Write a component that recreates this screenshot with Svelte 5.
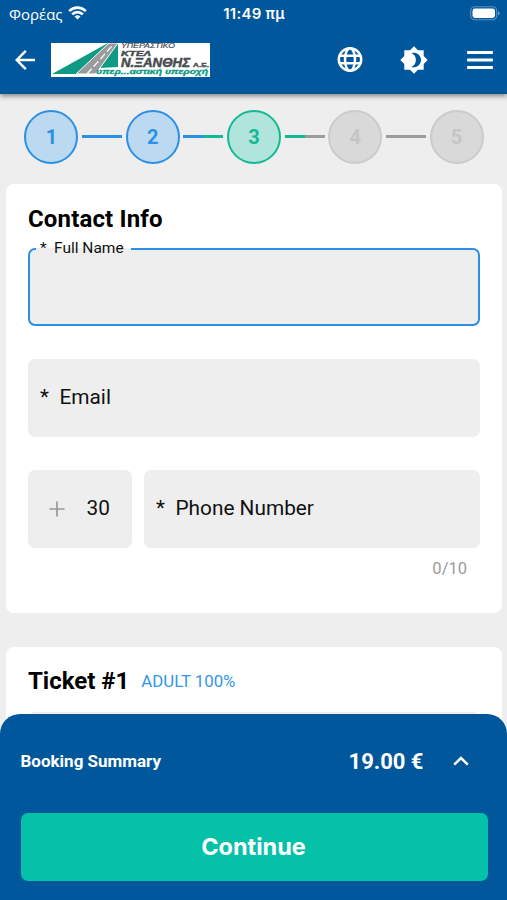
<script>
  const steps = [
    { n: 1, state: 'done', line: 'blue' },
    { n: 2, state: 'done', line: 'blue-green' },
    { n: 3, state: 'current', line: 'green-grey' },
    { n: 4, state: 'todo', line: 'grey' },
    { n: 5, state: 'todo', line: null }
  ];
</script>

<div class="screen">
  <header>
    <div class="status">
      <div class="carrier">
        <span>Φορέας</span>
        <svg width="19" height="14" viewBox="0 0 19 14" fill="none" stroke="#fff" stroke-width="2.7">
          <path d="M1.2 5.1a11.8 11.8 0 0 1 16.6 0" />
          <path d="M4.2 8.4a7.5 7.5 0 0 1 10.6 0" />
          <path d="M9.5 13.6L6.5 10.6a4.3 4.3 0 0 1 6 0Z" fill="#fff" stroke="none" />
        </svg>
      </div>
      <div class="time">11:49 πμ</div>
      <div class="battery">
        <svg width="30" height="15" viewBox="0 0 30 15">
          <rect x=".7" y=".7" width="26" height="13" rx="4" fill="none" stroke="#5b92c2" stroke-width="1.1" />
          <rect x="2.5" y="2.5" width="22.5" height="9.5" rx="2.4" fill="#fff" />
          <path d="M28 5v4.500q1.600-.8 1.600-2.250T28 5Z" fill="#6b9fca" />
        </svg>
      </div>
    </div>
    <nav>
      <svg class="back" width="22" height="22" viewBox="0 0 22 22" fill="none" stroke="#fff" stroke-width="2.4">
        <path d="M21 11H2.500M11.800 1.800L2.700 11l9.100 9.200" />
      </svg>
      <svg class="logo" width="159" height="34" viewBox="0 0 159 34">
        <rect width="159" height="34" fill="#fff" />
        <path d="M1 31L57 0H67V24L48 25L44 31Z" fill="#109a84" />
        <path d="M25 31L58 0H67L49 25L44 31Z" fill="#999b9c" stroke="#fff" stroke-width="1" />
        <path d="M36 31L61 3" stroke="#fff" stroke-width="1.300" stroke-dasharray="7 3" />
        <g font-family="Liberation Sans, Arial, sans-serif" font-weight="700" fill="#484b50" stroke="#484b50">
          <text x="70" y="5.300" font-size="7" font-weight="400" font-style="italic" stroke-width=".2" textLength="54" lengthAdjust="spacingAndGlyphs">ΥΠΕΡΑΣΤΙΚΟ</text>
          <text x="70" y="12.800" font-size="7" font-style="italic" stroke-width=".4" textLength="30" lengthAdjust="spacingAndGlyphs">ΚΤΕΛ</text>
          <text x="70" y="24" font-size="12.500" font-style="italic" stroke-width=".5" textLength="69" lengthAdjust="spacingAndGlyphs">Ν.ΞΑΝΘΗΣ</text>
          <text x="142" y="24" font-size="5.500" stroke-width=".3" textLength="16" lengthAdjust="spacingAndGlyphs">Α.Ε.</text>
          <text x="45" y="31" font-size="6.500" font-style="italic" fill="#109a84" stroke="#109a84" stroke-width=".3" textLength="112" lengthAdjust="spacingAndGlyphs">υπερ...αστική υπεροχή</text>
        </g>
      </svg>
      <div class="actions">
        <svg width="26" height="26" viewBox="0 0 26 26" fill="none" stroke="#fff" stroke-width="2.500">
          <circle cx="13" cy="12.500" r="11.200" />
          <ellipse cx="13" cy="12.500" rx="5" ry="11.200" />
          <path d="M2.800 8.800H23.200M2.800 16.200H23.200" />
        </svg>
        <svg width="28" height="28" viewBox="0 0 28 28">
          <path d="M14 .3L18 4.300H23.700V10L27.700 14L23.700 18V23.700H18L14 27.700L10 23.700H4.300V18L.3 14L4.300 10V4.300H10Z" fill="#fff" />
          <path d="M11.300 7.100A7.300 7.300 0 1 1 11.300 20.900A7.500 7.500 0 0 0 11.300 7.100Z" fill="#01579b" />
        </svg>
        <svg width="26" height="18" viewBox="0 0 26 18" fill="#fff">
          <rect width="26" height="3" rx=".8" />
          <rect y="7.500" width="26" height="3" rx=".8" />
          <rect y="15" width="26" height="3" rx=".8" />
        </svg>
      </div>
    </nav>
  </header>

  <div class="steps">
    {#each steps as s}
      <div class="step {s.state}">{s.n}</div>
      {#if s.line}<div class="line {s.line}"></div>{/if}
    {/each}
  </div>

  <section class="card contact">
    <h2>Contact Info</h2>
    <div class="field focused">
      <div class="float"><i>*</i><span>Full Name</span></div>
    </div>
    <div class="field"><i>*</i><span>Email</span></div>
    <div class="row">
      <div class="field code">
        <svg width="16" height="16" viewBox="0 0 16 16" stroke="#989898" stroke-width="1.700"><path d="M8 .5V15.500M.5 8H15.500" /></svg>
        <span>30</span>
      </div>
      <div class="field phone"><i>*</i><span>Phone Number</span></div>
    </div>
    <div class="counter">0/10</div>
  </section>

  <section class="card ticket">
    <div class="title"><h2>Ticket #1</h2><span>ADULT 100%</span></div>
    <div class="field"></div>
  </section>

  <footer>
    <div class="summary">
      <span class="label">Booking Summary</span>
      <span class="price">19.00 €</span>
      <svg width="16" height="10" viewBox="0 0 16 10" fill="none" stroke="#fff" stroke-width="2.500"><path d="M1.200 8.700L8 2L14.800 8.700" /></svg>
    </div>
    <button>Continue</button>
  </footer>
</div>

<style>
  :global(body) { margin: 0; }
  .screen, .screen * { box-sizing: border-box; }
  .screen {
    position: relative;
    width: 507px;
    height: 900px;
    overflow: hidden;
    background: #eee;
    color: #000;
    font-family: Roboto, "Noto Sans", sans-serif;
  }
  svg { display: block; flex: none; }
  header {
    position: relative;
    height: 94px;
    background: #01579b;
    color: #fff;
    box-shadow: 0 2px 5px rgba(0, 0, 0, .45);
  }
  .status {
    display: grid;
    grid-template-columns: 1fr auto 1fr;
    align-items: center;
    height: 28px;
    padding: 0 7px 0 9px;
    font-family: Inter, "Noto Sans", sans-serif;
    font-size: 14px;
  }
  .carrier { display: flex; align-items: center; gap: 5px; margin-top: -1px; font-family: "Open Sans", sans-serif; font-size: 15px; }
  .carrier svg { margin-top: -1px; }
  .time { margin-left: -1px; font-weight: 600; font-size: 15px; letter-spacing: .25px; margin-top: -1px; }
  .battery { display: flex; justify-content: flex-end; margin-top: -2px; }
  nav { display: flex; align-items: center; height: 63px; padding: 0 14px 0 14px; }
  .logo { margin-left: 15px; }
  .actions { display: flex; align-items: center; margin-left: auto; }
  .actions svg:nth-child(2) { margin: 0 39px 0 37px; }
  .steps { display: flex; align-items: center; gap: 3.650px; height: 90px; padding: 0 0 5px 24.450px; }
  .step {
    display: flex;
    align-items: center;
    justify-content: center;
    flex: none;
    width: 54px;
    height: 54px;
    border: 2px solid;
    border-radius: 50%;
    font-size: 20px;
    font-weight: 700;
  }
  .done { color: #2b90e5; background: #bbd9f0; }
  .current { color: #13b995; background: #b1e4da; }
  .todo { color: #c5c5c5; background: #d9d9d9; border-color: #cbcbcb; }
  .line { flex: none; width: 40px; height: 3px; }
  .blue { background: #2b90e5; }
  .blue-green { background: linear-gradient(90deg, #2b90e5 50%, #13b995 50%); }
  .green-grey { background: linear-gradient(90deg, #13b995 50%, #9c9c9c 50%); }
  .grey { background: #9c9c9c; }
  .card { margin: 0 5px 0 6px; padding: 0 22px; background: #fff; border-radius: 8px; }
  .contact { height: 429px; padding-top: 20px; }
  h2 { margin: 0; font-size: 24px; line-height: 30px; font-weight: 700; }
  .contact h2 { letter-spacing: .15px; }
  .field {
    display: flex;
    align-items: center;
    height: 78px;
    margin-bottom: 33px;
    padding: 0 12px 2px;
    border-radius: 7px;
    background: #eee;
    color: #111;
    font-size: 20.800px;
  }
  .field i { font-style: normal; width: 19.500px; }
  .focused { position: relative; margin-top: 14px; border: 2.500px solid #2b90e5; }
  .float {
    position: absolute;
    left: 6px;
    top: -11px;
    display: flex;
    width: 95px;
    padding-left: 4px;
    background: linear-gradient(#fff 9px, #eee 9px);
    font-size: 15.500px;
    line-height: 18px;
    white-space: nowrap;
  }
  .float i { width: 14px; }
  .row { display: flex; gap: 12px; }
  .code { width: 104px; padding: 0 22px 2px 21px; justify-content: space-between; }
  .code svg { margin-top: 2px; }
  .phone { flex: 1; }
  .counter { margin: -22px 13px 0 0; text-align: right; color: #9b9b9b; font-size: 16.500px; line-height: 20px; }
  .ticket { height: 150px; margin-top: 34px; padding-top: 19px; }
  .title { display: flex; align-items: center; height: 30px; margin-bottom: 16px; }
  .title span { margin-left: 12px; color: #3496e8; font-size: 16.800px; }
  footer {
    position: absolute;
    left: 0;
    right: 0;
    bottom: 0;
    height: 186px;
    padding: 0 19.500px 0 20.500px;
    border-radius: 20px 20px 0 0;
    background: #01579b;
    color: #fff;
  }
  .summary { display: flex; align-items: center; height: 99px; padding: 0 19px 5px 0; }
  .label { font-size: 17px; font-weight: 700; }
  .price { margin: 0 29px 0 auto; font-size: 22px; font-weight: 700; }
  button {
    display: block;
    width: 100%;
    height: 68px;
    padding: 0 1px 2px 0;
    border: 0;
    border-radius: 7px;
    background: #04c1a8;
    color: #fff;
    font: 700 23.500px Inter, sans-serif;
  }
</style>
